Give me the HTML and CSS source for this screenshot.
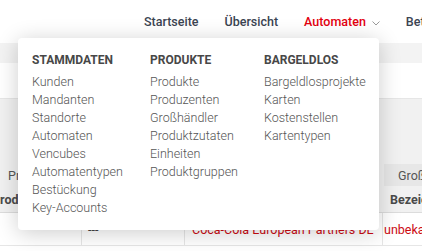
FILE: index.html
```html
<!DOCTYPE html>
<html lang="de">
<head>
<meta charset="utf-8">
<link rel="stylesheet" href="styles.css">
</head>
<body>
<div class="page">
  <header class="topbar">
    <nav class="nav">
      <a class="nav-item">Startseite</a>
      <a class="nav-item">Übersicht</a>
      <a class="nav-item active">Automaten
        <svg class="chev" width="8" height="5" viewBox="0 0 8 5"><path d="M0.5 0.5 L4 4 L7.5 0.5" fill="none" stroke="#9a9a9a" stroke-width="1"/></svg>
      </a>
      <a class="nav-item">Betreiber</a>
    </nav>
  </header>
  <div class="band-grey"></div>
  <div class="band-white"></div>
  <div class="table-area">
    <div class="row filter-row">
      <div class="cell c1"><span class="filter-text">Produkt</span></div>
      <div class="cell c2"></div>
      <div class="cell c3"></div>
      <div class="cell c4 filter-box">Großhändler</div>
    </div>
    <div class="row head-row">
      <div class="cell c1"><span class="head-shift">Produkt</span></div>
      <div class="cell c2"></div>
      <div class="cell c3"></div>
      <div class="cell c4">Bezeichnung</div>
    </div>
  </div>
  <div class="row data-row">
    <div class="cell c1"></div>
    <div class="cell c2">---</div>
    <div class="cell c3 red">Coca-Cola European Partners DE</div>
    <div class="cell c4 red">unbekannt</div>
  </div>

  <div class="dropdown">
    <div class="col col-a">
      <div class="col-head">STAMMDATEN</div>
      <a class="link">Kunden</a>
      <a class="link">Mandanten</a>
      <a class="link">Standorte</a>
      <a class="link">Automaten</a>
      <a class="link">Vencubes</a>
      <a class="link">Automatentypen</a>
      <a class="link">Bestückung</a>
      <a class="link">Key-Accounts</a>
    </div>
    <div class="col col-b">
      <div class="col-head">PRODUKTE</div>
      <a class="link">Produkte</a>
      <a class="link">Produzenten</a>
      <a class="link">Großhändler</a>
      <a class="link">Produktzutaten</a>
      <a class="link">Einheiten</a>
      <a class="link">Produktgruppen</a>
    </div>
    <div class="col col-c">
      <div class="col-head">BARGELDLOS</div>
      <a class="link">Bargeldlosprojekte</a>
      <a class="link">Karten</a>
      <a class="link">Kostenstellen</a>
      <a class="link">Kartentypen</a>
    </div>
  </div>
</div>
</body>
</html>
```
FILE: styles.css
```css
* { box-sizing: border-box; }
html, body { margin: 0; padding: 0; }
body {
  width: 422px;
  height: 251px;
  overflow: hidden;
  background: #fff;
  font-family: Roboto, "Liberation Sans", sans-serif;
  font-size: 12.5px;
  color: #444;
}
.page { position: relative; width: 422px; height: 251px; overflow: hidden; }

.topbar { height: 43px; background: #fff; }
.nav { display: flex; padding-left: 131px; white-space: nowrap; }
.nav-item {
  display: flex; align-items: center;
  padding: 0 13px;
  height: 43px;
  font-weight: 500;
  font-size: 12.5px;
  color: #3b4452;
}
.nav-item.active { color: #e3000f; }
.chev { margin-left: 6px; margin-top: 3px; }

.band-grey { height: 20px; background: #f3f3f3; }
.band-white { height: 36px; background: #fff; border-bottom: 1px solid #e6e6e6; }

.table-area { background: #f1f1f1; padding-top: 65px; border-bottom: 1px solid #dcdcdc; }
.row { display: grid; grid-template-columns: 82px 103px 198px 1fr; white-space: nowrap; }
.cell { overflow: hidden; display: flex; align-items: center; }
.filter-row { height: 22px; }
.filter-row .c1 { padding-left: 8px; color: #555; }
.filter-box { background: #e7e7e7; padding-left: 14px; color: #555; margin-left: 1px; }
.head-row { height: 26px; font-weight: 700; color: #4a4a4a; }
.head-shift { margin-left: -8px; }
.head-row .c4 { padding-left: 7px; }

.data-row { height: 33px; border-bottom: 1px solid #e6e6e6; }
.data-row .cell { border-right: 1px solid #e6e6e6; }
.data-row .c4 { border-right: none; }
.data-row .c2 { padding-left: 6px; color: #444; }
.data-row .c3 { padding-left: 7px; }
.data-row .c4 { padding-left: 1px; }
.red { color: #cc0a12; }

.dropdown {
  position: absolute;
  left: 18px; top: 38px;
  width: 361px; height: 192px;
  background: #fff;
  border-radius: 4px;
  box-shadow: 0 3px 22px rgba(0,0,0,0.2);
  padding: 13px 12px 13px 14px;
  display: grid;
  grid-template-columns: 118px 114px 1fr;
}
.col { display: flex; flex-direction: column; }
.col-head {
  font-weight: 700; font-size: 12px; color: #474747;
  line-height: 18px; margin-bottom: 4px;
}
.link {
  font-weight: 300; font-size: 12.5px; color: #555;
  line-height: 18px; white-space: nowrap;
}
```
